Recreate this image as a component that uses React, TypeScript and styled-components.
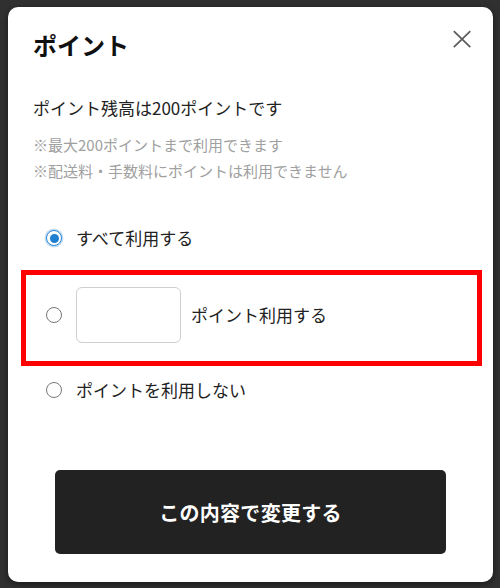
import React, { useState } from "react";
import styled, { createGlobalStyle, css } from "styled-components";

const GlobalStyle = createGlobalStyle`
  html, body {
    margin: 0;
    padding: 0;
    background: #303030;
    font-family: "Noto Sans CJK JP", "Noto Sans", sans-serif;
    height: 588px;
    overflow: hidden;
  }
  * { box-sizing: border-box; }
`;

const Page = styled.div`
  padding: 7px 7px 0 8px;
`;

const Modal = styled.div`
  width: 485px;
  height: 575px;
  background: #ffffff;
  border-radius: 10px;
  padding: 22px 0 28px 0;
  display: flex;
  flex-direction: column;
  box-shadow: 0 2px 6px rgba(0, 0, 0, 0.5);
`;

const Header = styled.div`
  display: flex;
  justify-content: space-between;
  align-items: flex-start;
  padding: 0 19px 0 25px;
`;

const Title = styled.h2`
  margin: 0;
  font-size: 24px;
  line-height: 32px;
  font-weight: 700;
  color: #111;
`;

const CloseButton = styled.button`
  width: 24px;
  height: 24px;
  margin-top: -2px;
  padding: 0;
  border: none;
  background: transparent;
  display: flex;
  align-items: center;
  justify-content: center;
  cursor: pointer;
`;

const Body = styled.div`
  padding: 0 25px;
`;

const Balance = styled.p`
  margin: 34px 0 0 0;
  font-size: 17px;
  line-height: 26px;
  color: #222;
`;

const Notes = styled.div`
  margin-top: 11px;
  display: flex;
  flex-direction: column;
`;

const Note = styled.p`
  margin: 0;
  font-size: 15px;
  line-height: 26px;
  color: #a0a0a0;
`;

const Options = styled.div`
  margin-top: 34px;
  padding: 0 11px 0 13px;
  display: flex;
  flex-direction: column;
`;

const OptionRow = styled.label<{ $highlight?: boolean }>`
  display: flex;
  align-items: center;
  gap: 14px;
  height: 40px;
  padding-left: 25px;
  cursor: pointer;
  ${(p) =>
    p.$highlight &&
    css`
      height: 96px;
      margin: 12px 0 4px 0;
      border: 5px solid #ff0000;
      padding-left: 20px;
      padding-bottom: 6px;
    `}
`;

const RadioDot = styled.span<{ $checked?: boolean }>`
  flex: 0 0 auto;
  width: 16px;
  height: 16px;
  border-radius: 50%;
  border: 1.5px solid #777777;
  background: #fff;
  display: flex;
  align-items: center;
  justify-content: center;
  ${(p) =>
    p.$checked &&
    css`
      border: 1.5px solid #2a86d6;
      box-shadow: 0 0 0 1.5px #c4def3;
      &::after {
        content: "";
        width: 9px;
        height: 9px;
        border-radius: 50%;
        background: #1f7fd0;
      }
    `}
`;

const OptionText = styled.span`
  font-size: 17px;
  line-height: 26px;
  color: #222;
`;

const PointInput = styled.input`
  width: 105px;
  height: 56px;
  border: 1px solid #cfcfcf;
  border-radius: 6px;
  font-size: 17px;
  padding: 0 8px;
  margin-right: -4px;
  outline: none;
  font-family: inherit;
`;

const Footer = styled.div`
  margin-top: auto;
  display: flex;
  justify-content: center;
`;

const SubmitButton = styled.button`
  width: 391px;
  height: 84px;
  border: none;
  border-radius: 5px;
  background: #222222;
  color: #ffffff;
  font-family: inherit;
  font-size: 20px;
  font-weight: 700;
  letter-spacing: 0.3px;
  cursor: pointer;
`;

export default function App() {
  const [choice, setChoice] = useState<"all" | "some" | "none">("all");
  return (
    <>
      <GlobalStyle />
      <Page>
        <Modal>
          <Header>
            <Title>ポイント</Title>
            <CloseButton aria-label="閉じる">
              <svg width="24" height="24" viewBox="0 0 24 24">
                <path
                  d="M3.8 4.2 L20.3 20.2 M20.3 4.2 L3.8 20.2"
                  stroke="#5a5a5a"
                  strokeWidth="1.7"
                  fill="none"
                />
              </svg>
            </CloseButton>
          </Header>
          <Body>
            <Balance>ポイント残高は200ポイントです</Balance>
            <Notes>
              <Note>※最大200ポイントまで利用できます</Note>
              <Note>※配送料・手数料にポイントは利用できません</Note>
            </Notes>
          </Body>
          <Options>
            <OptionRow onClick={() => setChoice("all")}>
              <RadioDot $checked={choice === "all"} />
              <OptionText>すべて利用する</OptionText>
            </OptionRow>
            <OptionRow $highlight onClick={() => setChoice("some")}>
              <RadioDot $checked={choice === "some"} />
              <PointInput type="text" />
              <OptionText>ポイント利用する</OptionText>
            </OptionRow>
            <OptionRow onClick={() => setChoice("none")}>
              <RadioDot $checked={choice === "none"} />
              <OptionText>ポイントを利用しない</OptionText>
            </OptionRow>
          </Options>
          <Footer>
            <SubmitButton>この内容で変更する</SubmitButton>
          </Footer>
        </Modal>
      </Page>
    </>
  );
}
